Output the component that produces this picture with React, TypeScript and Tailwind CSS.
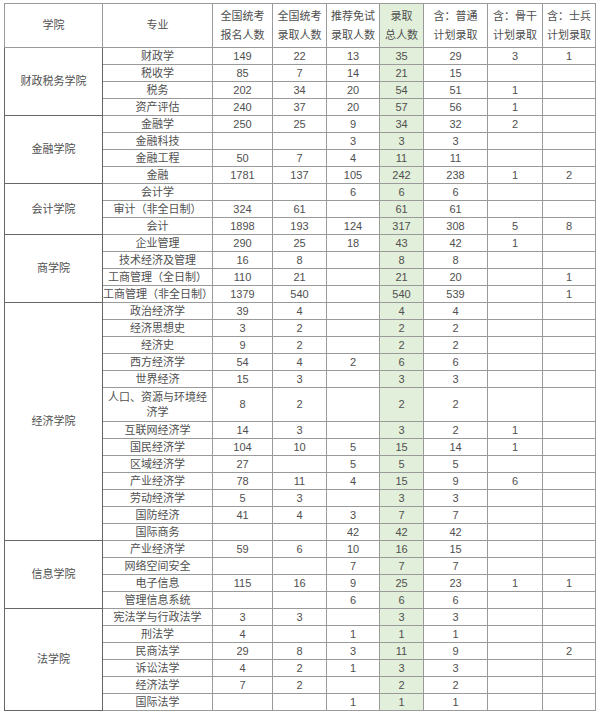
import React from "react"

type Row = [string, string, string, string, string, string, string, string]

type Group = {
  school: string
  rows: Row[]
}

const groups: Group[] = [
  {
    school: "财政税务学院",
    rows: [
      ["财政学", "149", "22", "13", "35", "29", "3", "1"],
      ["税收学", "85", "7", "14", "21", "15", "", ""],
      ["税务", "202", "34", "20", "54", "51", "1", ""],
      ["资产评估", "240", "37", "20", "57", "56", "1", ""],
    ],
  },
  {
    school: "金融学院",
    rows: [
      ["金融学", "250", "25", "9", "34", "32", "2", ""],
      ["金融科技", "", "", "3", "3", "3", "", ""],
      ["金融工程", "50", "7", "4", "11", "11", "", ""],
      ["金融", "1781", "137", "105", "242", "238", "1", "2"],
    ],
  },
  {
    school: "会计学院",
    rows: [
      ["会计学", "", "", "6", "6", "6", "", ""],
      ["审计（非全日制）", "324", "61", "", "61", "61", "", ""],
      ["会计", "1898", "193", "124", "317", "308", "5", "8"],
    ],
  },
  {
    school: "商学院",
    rows: [
      ["企业管理", "290", "25", "18", "43", "42", "1", ""],
      ["技术经济及管理", "16", "8", "", "8", "8", "", ""],
      ["工商管理（全日制）", "110", "21", "", "21", "20", "", "1"],
      ["工商管理（非全日制）", "1379", "540", "", "540", "539", "", "1"],
    ],
  },
  {
    school: "经济学院",
    rows: [
      ["政治经济学", "39", "4", "", "4", "4", "", ""],
      ["经济思想史", "3", "2", "", "2", "2", "", ""],
      ["经济史", "9", "2", "", "2", "2", "", ""],
      ["西方经济学", "54", "4", "2", "6", "6", "", ""],
      ["世界经济", "15", "3", "", "3", "3", "", ""],
      ["人口、资源与环境经济学", "8", "2", "", "2", "2", "", ""],
      ["互联网经济学", "14", "3", "", "3", "2", "1", ""],
      ["国民经济学", "104", "10", "5", "15", "14", "1", ""],
      ["区域经济学", "27", "", "5", "5", "5", "", ""],
      ["产业经济学", "78", "11", "4", "15", "9", "6", ""],
      ["劳动经济学", "5", "3", "", "3", "3", "", ""],
      ["国防经济", "41", "4", "3", "7", "7", "", ""],
      ["国际商务", "", "", "42", "42", "42", "", ""],
    ],
  },
  {
    school: "信息学院",
    rows: [
      ["产业经济学", "59", "6", "10", "16", "15", "", ""],
      ["网络空间安全", "", "", "7", "7", "7", "", ""],
      ["电子信息", "115", "16", "9", "25", "23", "1", "1"],
      ["管理信息系统", "", "", "6", "6", "6", "", ""],
    ],
  },
  {
    school: "法学院",
    rows: [
      ["宪法学与行政法学", "3", "3", "", "3", "3", "", ""],
      ["刑法学", "4", "", "1", "1", "1", "", ""],
      ["民商法学", "29", "8", "3", "11", "9", "", "2"],
      ["诉讼法学", "4", "2", "1", "3", "3", "", ""],
      ["经济法学", "7", "2", "", "2", "2", "", ""],
      ["国际法学", "", "", "1", "1", "1", "", ""],
    ],
  },
]

const headers: [string, string][] = [
  ["全国统考", "报名人数"],
  ["全国统考", "录取人数"],
  ["推荐免试", "录取人数"],
  ["录取", "总人数"],
  ["含：普通", "计划录取"],
  ["含：骨干", "计划录取"],
  ["含：士兵", "计划录取"],
]

const cell = "border border-[#9a9a9a] p-0 text-center align-middle"

export default function App() {
  return (
    <div className="min-h-[715px] w-[600px] bg-white pl-[4px] pt-[3px] font-['Liberation_Sans','Noto_Sans_CJK_SC',sans-serif] text-[11px] text-[#505050]">
      <table className="w-[591px] table-fixed border-collapse border border-[#666]">
        <colgroup>
          <col className="w-[98px]" />
          <col className="w-[110px]" />
          <col className="w-[60px]" />
          <col className="w-[54px]" />
          <col className="w-[53px]" />
          <col className="w-[44px]" />
          <col className="w-[64px]" />
          <col className="w-[55px]" />
          <col className="w-[53px]" />
        </colgroup>
        <thead>
          <tr className="h-[44px] leading-[19px]">
            <th className={`${cell} font-normal`}>学院</th>
            <th className={`${cell} font-normal`}>专业</th>
            {headers.map(([a, b], i) => (
              <th key={i} className={`${cell} font-normal ${i === 3 ? "bg-[#e2efda]" : ""}`}>
                {a}
                <br />
                {b}
              </th>
            ))}
          </tr>
        </thead>
        <tbody className="leading-[15px]">
          {groups.map((g) =>
            g.rows.map((r, i) => {
              const tall = r[0].length > 10
              return (
                <tr key={g.school + r[0]} className={tall ? "h-[34px]" : "h-[17px]"}>
                  {i === 0 && (
                    <td rowSpan={g.rows.length} className={`${cell} border-[#666]`}>
                      {g.school}
                    </td>
                  )}
                  <td className={`${cell} whitespace-nowrap`}>
                    {tall ? (
                      <>
                        人口、资源与环境经
                        <br />
                        济学
                      </>
                    ) : (
                      r[0]
                    )}
                  </td>
                  {r.slice(1).map((v, j) => (
                    <td key={j} className={`${cell} ${j === 3 ? "bg-[#e2efda]" : ""}`}>
                      {v}
                    </td>
                  ))}
                </tr>
              )
            })
          )}
        </tbody>
      </table>
    </div>
  )
}
